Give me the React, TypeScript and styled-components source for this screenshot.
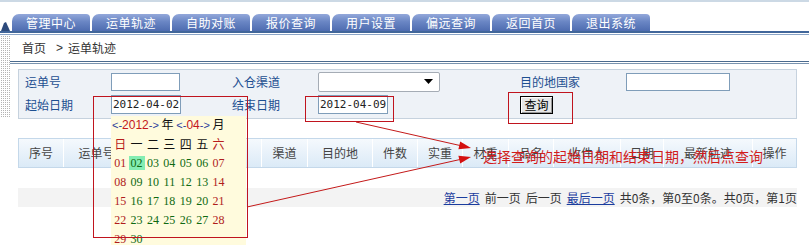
import React from 'react';
import styled, { createGlobalStyle } from 'styled-components';

const GlobalStyle = createGlobalStyle`
  html, body { margin: 0; padding: 0; background: #fff; }
  body {
    font-family: 'Noto Sans CJK SC', 'Liberation Sans', sans-serif;
    font-size: 12px;
    color: #333;
  }
`;

const tabs = ['管理中心', '运单轨迹', '自助对账', '报价查询', '用户设置', '偏远查询', '返回首页', '退出系统'];

const columns: [string, number][] = [
  ['序号', 45], ['运单号', 66], ['转单号', 66], ['客户', 66], ['渠道', 46], ['目的地', 65],
  ['件数', 45], ['实重', 45], ['材重', 46], ['品名', 45], ['收件人', 67], ['日期', 43],
  ['最新轨迹', 89], ['操作', 43],
];

const weekDays = ['日', '一', '二', '三', '四', '五', '六'];
const days = Array.from({ length: 30 }, (_, i) => String(i + 1).padStart(2, '0'));

export default function App() {
  return (
    <Page>
      <GlobalStyle />
      <TopLine />
      <TabBar>
        <Corner width="9" height="9" viewBox="0 0 9 9">
          <polygon points="0,9 3,1 5,0 9,9" fill="#2d4a7c" />
        </Corner>
        {tabs.map((t) => (
          <Tab key={t}>{t}</Tab>
        ))}
      </TabBar>
      <TabRule />
      <Body>
        <DotStrip />
        <Main>
          <Breadcrumb>
            <span>首页</span>
            <Crumb>&gt;</Crumb>
            <span>运单轨迹</span>
          </Breadcrumb>
          <SectionRule />
          <SearchBox>
            <FieldLabel>运单号</FieldLabel>
            <Cell><TextBox $w={69} $h={18} /></Cell>
            <FieldLabel>入仓渠道</FieldLabel>
            <Cell>
              <SelectBox>
                <svg width="9" height="5" viewBox="0 0 9 5">
                  <polygon points="0,0 9,0 4.5,5" fill="#000" />
                </svg>
              </SelectBox>
            </Cell>
            <FieldLabel>目的地国家</FieldLabel>
            <Cell><TextBox $w={104} $h={18} /></Cell>

            <FieldLabel>起始日期</FieldLabel>
            <Cell><TextBox $w={70} $h={19}>2012-04-02</TextBox></Cell>
            <FieldLabel>结束日期</FieldLabel>
            <Cell><TextBox $w={70} $h={19}>2012-04-09</TextBox></Cell>
            <Cell><QueryButton>查询</QueryButton></Cell>
            <Cell />
          </SearchBox>
          <TableHead $cols={columns.map((c) => c[1])}>
            {columns.map(([name]) => (
              <HeadCell key={name}>{name}</HeadCell>
            ))}
          </TableHead>
          <Pager>
            <PageLink>第一页</PageLink>
            <span>前一页</span>
            <span>后一页</span>
            <PageLink>最后一页</PageLink>
            <span>共0条，第0至0条。共0页，第1页</span>
          </Pager>
        </Main>
      </Body>

      <Calendar>
        <CalTitle>
          <Nav>&lt;-</Nav><Hot>2012</Hot><Nav>-&gt;</Nav> 年 <Nav>&lt;-</Nav><Hot>04</Hot><Nav>-&gt;</Nav> 月
        </CalTitle>
        <CalGrid>
          {weekDays.map((d, i) => (
            <WeekDay key={d} $weekend={i === 0 || i === 6}>{d}</WeekDay>
          ))}
          {days.map((d, i) => (
            <DayCell key={d}>
              <DayNum $weekend={i % 7 === 0 || i % 7 === 6} $selected={d === '02'}>{d}</DayNum>
            </DayCell>
          ))}
        </CalGrid>
      </Calendar>

      <MarkBox style={{ left: 93, top: 96, width: 153, height: 140 }} />
      <MarkBox style={{ left: 305, top: 96, width: 87, height: 24 }} />
      <MarkBox style={{ left: 508, top: 92, width: 63, height: 30 }} />
      <Arrows width="809" height="245" viewBox="0 0 809 245">
        <line x1="356" y1="122" x2="460" y2="145.5" stroke="#c41a1a" strokeWidth="1" />
        <polygon points="471,148 460.2,141.5 458.4,149.3" fill="#d41010" />
        <line x1="247" y1="207" x2="460" y2="159.5" stroke="#c41a1a" strokeWidth="1" />
        <polygon points="471,157 460.2,163.5 458.4,155.7" fill="#d41010" />
      </Arrows>
      <Note>选择查询的起始日期和结束日期，然后点查询</Note>
    </Page>
  );
}

const Page = styled.div`
  position: relative;
  width: 809px;
  height: 245px;
  overflow: hidden;
  background: #fff;
`;
const TopLine = styled.div`
  height: 2px;
  background: #ccd9e5;
`;
const TabBar = styled.div`
  display: flex;
  align-items: flex-end;
  gap: 2px;
  height: 17px;
  margin-top: 12px;
  padding-left: 1px;
`;
const Corner = styled.svg`
  display: block;
  flex: none;
`;
const Tab = styled.div`
  flex: none;
  width: 78px;
  height: 17px;
  line-height: 18px;
  text-align: center;
  color: #fff;
  font-size: 12px;
  letter-spacing: 0.5px;
  border-radius: 7px 4px 0 0;
  background: linear-gradient(#93a8da, #6a86c4 45%, #4e6cb0);
`;
const TabRule = styled.div`
  height: 1px;
  border-top: 2px solid #41669a;
  border-bottom: 1px solid #8ba5c7;
`;
const Body = styled.div`
  display: flex;
  align-items: flex-start;
`;
const DotStrip = styled.div`
  flex: none;
  width: 10px;
  height: 83px;
  background: conic-gradient(from 90deg at 1px 1px, #b4b4b4 90deg, transparent 0) 0 0 / 2px 2px;
`;
const Main = styled.div`
  flex: 1;
  min-width: 0;
`;
const Breadcrumb = styled.div`
  display: flex;
  height: 26px;
  line-height: 26px;
  padding-left: 12px;
  color: #333;
  font-size: 12px;
`;
const Crumb = styled.span`
  margin: 0 5px 0 10px;
  font-family: 'Liberation Sans', sans-serif;
`;
const SectionRule = styled.div`
  height: 1px;
  border-top: 1px solid #4a6a8e;
  border-bottom: 1px solid #7a94b0;
`;
const SearchBox = styled.div`
  display: grid;
  grid-template-columns: 86px 121px 86px 202px 106px 1fr;
  grid-auto-rows: 23px;
  align-items: center;
  margin: 5px 12px 0 8px;
  padding: 0 0 2px 6px;
  border: 1px solid #c6d2de;
  background: #eef2f7;
`;
const FieldLabel = styled.div`
  color: #1d4f91;
  font-size: 12px;
`;
const Cell = styled.div`
  display: flex;
  align-items: center;
`;
const TextBox = styled.div<{ $w: number; $h: number }>`
  box-sizing: border-box;
  width: ${(p) => p.$w}px;
  height: ${(p) => p.$h}px;
  line-height: ${(p) => p.$h - 2}px;
  padding: 0 1px;
  border: 1px solid #7f9db9;
  background: #fff;
  color: #222;
  font-family: 'DejaVu Sans Mono', 'Liberation Mono', monospace;
  font-size: 11px;
  white-space: nowrap;
`;
const SelectBox = styled.div`
  box-sizing: border-box;
  width: 122px;
  height: 20px;
  display: flex;
  align-items: center;
  justify-content: flex-end;
  padding-right: 6px;
  border: 1px solid #a5acb5;
  border-radius: 2px;
  background: #fff;
`;
const QueryButton = styled.button`
  box-sizing: border-box;
  width: 33px;
  height: 18px;
  padding: 0;
  border: 1px solid #000;
  box-shadow: inset 1px 1px 0 #fff, inset -1px -1px 0 #9a9a9a;
  background: #e6e6e6;
  color: #000;
  font-family: 'Noto Sans CJK SC', sans-serif;
  font-size: 12px;
  line-height: 16px;
`;
const TableHead = styled.div<{ $cols: number[] }>`
  display: grid;
  grid-template-columns: ${(p) => p.$cols.map((w) => `${w}px`).join(' ')};
  height: 28px;
  margin: 19px 12px 0 8px;
  border: 1px solid #c4d8ea;
  background: linear-gradient(#f5f9fd, #dbeaf7);
  overflow: hidden;
`;
const HeadCell = styled.div`
  line-height: 28px;
  text-align: center;
  color: #444;
  border-right: 1px solid #fff;
  white-space: nowrap;
  &:last-child { border-right: none; }
`;
const Pager = styled.div`
  display: flex;
  justify-content: flex-end;
  gap: 5px;
  height: 19px;
  line-height: 19px;
  margin: 20px 12px 0 8px;
  background: #f3f3f3;
  color: #333;
  white-space: nowrap;
`;
const PageLink = styled.span`
  color: #1b3d9e;
  text-decoration: underline;
`;
const Calendar = styled.div`
  position: absolute;
  left: 111px;
  top: 116px;
  width: 135px;
  height: 140px;
  background: #fffbdd;
`;
const CalTitle = styled.div`
  height: 15px;
  line-height: 15px;
  padding-left: 1px;
  font-size: 12px;
  color: #111;
  white-space: nowrap;
`;
const Nav = styled.span`
  color: #2a3c9c;
  font-family: 'Liberation Sans', sans-serif;
  font-size: 11px;
`;
const Hot = styled.span`
  color: #c4161c;
  font-family: 'Liberation Sans', sans-serif;
`;
const CalGrid = styled.div`
  display: grid;
  grid-template-columns: repeat(7, 16.4px);
  grid-auto-rows: 19px;
  margin-top: 3px;
  padding-left: 1px;
  align-items: center;
  justify-items: center;
`;
const WeekDay = styled.div<{ $weekend: boolean }>`
  color: ${(p) => (p.$weekend ? '#b81c1c' : '#111')};
  font-size: 12px;
`;
const DayCell = styled.div`
  display: flex;
  justify-content: center;
`;
const DayNum = styled.span<{ $weekend: boolean; $selected: boolean }>`
  padding: 0 2px;
  line-height: 14px;
  font-family: 'Liberation Serif', serif;
  font-size: 12px;
  color: ${(p) => (p.$weekend ? '#b01c1c' : '#0f6a12')};
  background: ${(p) => (p.$selected ? '#84edb2' : 'transparent')};
`;
const MarkBox = styled.div`
  position: absolute;
  border: 1px solid #c0141e;
  pointer-events: none;
`;
const Arrows = styled.svg`
  position: absolute;
  left: 0;
  top: 0;
  pointer-events: none;
`;
const Note = styled.div`
  position: absolute;
  left: 483px;
  top: 148px;
  line-height: 17px;
  font-size: 14px;
  color: #d21c1c;
  white-space: nowrap;
`;
